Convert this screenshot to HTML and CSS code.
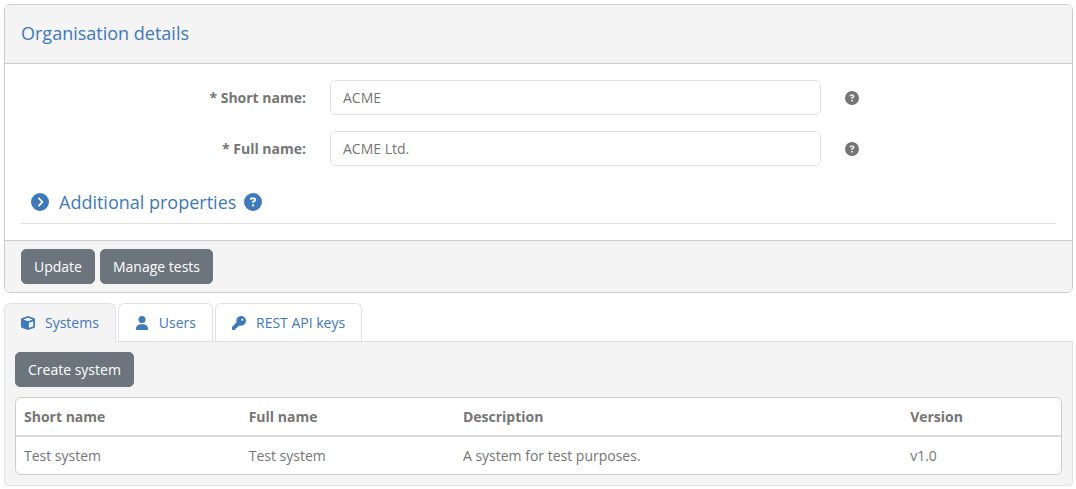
FILE: index.html
```html
<!DOCTYPE html>
<html lang="en">
<head>
    <meta charset="UTF-8">
    <meta name="viewport" content="width=device-width, initial-scale=1.0">
    <title>Organisation details</title>
    <link rel="stylesheet" href="styles.css">
</head>
<body>
    <!-- Shared icons -->
    <svg class="icon-defs" aria-hidden="true">
        <symbol id="icon-question" viewBox="0 0 512 512">
            <path d="M256 512A256 256 0 1 0 256 0a256 256 0 1 0 0 512zM169.8 165.3c7.9-22.3 29.1-37.3 52.8-37.3l58.3 0c34.9 0 63.1 28.3 63.1 63.1c0 22.6-12.1 43.5-31.7 54.8L280 264.4c-.2 13-10.9 23.6-24 23.6c-13.3 0-24-10.7-24-24l0-13.5c0-8.6 4.6-16.5 12.1-20.8l44.3-25.4c4.7-2.7 7.6-7.7 7.6-13.1c0-8.4-6.8-15.1-15.1-15.1l-58.3 0c-3.4 0-6.4 2.1-7.5 5.3l-.4 1.2c-4.4 12.5-18.2 19-30.6 14.6s-19-18.2-14.6-30.6l.4-1.2zM224 352a32 32 0 1 1 64 0 32 32 0 1 1 -64 0z"/>
        </symbol>
        <symbol id="icon-chevron" viewBox="0 0 512 512">
            <path d="M0 256a256 256 0 1 0 512 0A256 256 0 1 0 0 256zM241 377c-9.4 9.4-24.6 9.4-33.9 0s-9.4-24.6 0-33.9l87-87-87-87c-9.4-9.4-9.4-24.6 0-33.9s24.6-9.4 33.9 0L345 239c9.4 9.4 9.4 24.6 0 33.9L241 377z"/>
        </symbol>
    </svg>

    <!-- Organisation form -->
    <form class="card">
        <div class="card-header">
            <h1>Organisation details</h1>
        </div>
        <div class="card-body">
            <div class="form-row">
                <label for="short-name">* Short name:</label>
                <input type="text" id="short-name" value="ACME">
                <svg class="icon help" role="img" aria-label="Short name help"><use href="#icon-question"/></svg>
            </div>
            <div class="form-row">
                <label for="full-name">* Full name:</label>
                <input type="text" id="full-name" value="ACME Ltd.">
                <svg class="icon help" role="img" aria-label="Full name help"><use href="#icon-question"/></svg>
            </div>
            <h2 class="properties">
                <a href="#properties">
                    <svg class="icon icon-lg"><use href="#icon-chevron"/></svg>
                    <span>Additional properties</span>
                </a>
                <svg class="icon icon-lg" role="img" aria-label="Properties help"><use href="#icon-question"/></svg>
            </h2>
        </div>
        <div class="card-footer">
            <button type="button" class="btn">Update</button>
            <button type="button" class="btn">Manage tests</button>
        </div>
    </form>

    <!-- Tabs -->
    <nav class="tabs">
        <a href="#systems" class="tab active">
            <svg class="icon" viewBox="0 0 512 512"><path d="M234.5 5.7c13.9-5 29.1-5 43.1 0l192 68.6C495 83.4 512 107.5 512 134.6l0 242.9c0 27-17 51.2-42.5 60.3l-192 68.6c-13.9 5-29.1 5-43.1 0l-192-68.6C17 428.6 0 404.5 0 377.4L0 134.6c0-27 17-51.2 42.5-60.3l192-68.6zM256 66L82.3 128 256 190l173.7-62L256 66zm32 368.6l160-57.1 0-188L288 246.6l0 188z"/></svg>
            Systems
        </a>
        <a href="#users" class="tab">
            <svg class="icon" viewBox="0 0 448 512"><path d="M224 256A128 128 0 1 0 224 0a128 128 0 1 0 0 256zm-45.7 48C79.8 304 0 383.8 0 482.3C0 498.7 13.3 512 29.7 512l388.6 0c16.4 0 29.7-13.3 29.7-29.7C448 383.8 368.2 304 269.7 304l-91.4 0z"/></svg>
            Users
        </a>
        <a href="#api-keys" class="tab">
            <svg class="icon" viewBox="0 0 512 512"><path d="M336 352c97.2 0 176-78.8 176-176S433.2 0 336 0S160 78.8 160 176c0 18.7 2.9 36.8 8.3 53.7L7 391c-4.5 4.5-7 10.6-7 17l0 80c0 13.3 10.7 24 24 24l80 0c13.3 0 24-10.7 24-24l0-40 40 0c13.3 0 24-10.7 24-24l0-40 40 0c6.4 0 12.5-2.5 17-7l33.3-33.3c16.9 5.4 35 8.3 53.7 8.3zM376 96a40 40 0 1 1 0 80 40 40 0 1 1 0-80z"/></svg>
            REST API keys
        </a>
    </nav>

    <!-- Systems -->
    <div class="tab-pane" id="systems">
        <button type="button" class="btn">Create system</button>
        <div class="table-box">
            <table>
                <thead>
                    <tr>
                        <th class="col-short">Short name</th>
                        <th class="col-full">Full name</th>
                        <th class="col-description">Description</th>
                        <th>Version</th>
                    </tr>
                </thead>
                <tbody>
                    <tr>
                        <td>Test system</td>
                        <td>Test system</td>
                        <td>A system for test purposes.</td>
                        <td>v1.0</td>
                    </tr>
                </tbody>
            </table>
        </div>
    </div>
</body>
</html>
```
FILE: styles.css
```css
/* General Styles */

* {
    box-sizing: border-box;
}

body {
    margin: 0;
    padding: 4px 3px 3px 4px;
    background-color: #fff;
    color: #757575;
    font-family: "Open Sans", sans-serif;
    font-size: 14px;
    line-height: 21px;
}

h1, h2 {
    margin: 0;
    color: #3e79b9;
    font-size: 18px;
    font-weight: 400;
    line-height: 26px;
}

a {
    color: #3e79b9;
    text-decoration: none;
}

.icon-defs {
    display: none;
}

.icon {
    width: 14px;
    height: 14px;
    flex: none;
    fill: currentColor;
}

.icon-lg {
    width: 18px;
    height: 18px;
}

.btn {
    padding: 6px 12px;
    border: 1px solid #6c757d;
    border-radius: 5px;
    background-color: #6c757d;
    color: #fff;
    font-family: inherit;
    font-size: 14px;
    line-height: 21px;
}

.btn:hover {
    background-color: #5c636a;
}

/* Card */

.card {
    border: 1px solid #ccc;
    border-radius: 6px;
    overflow: hidden;
}

.card-header {
    padding: 15px 16px 17px;
    background-color: #f4f4f4;
    border-bottom: 1px solid #ccc;
}

.card-body {
    padding: 16px;
}

.card-footer {
    display: flex;
    gap: 5px;
    padding: 8px 16px;
    background-color: #f4f4f4;
    border-top: 1px solid #ccc;
}

.form-row {
    display: grid;
    grid-template-columns: 285fr 491fr 211fr;
    column-gap: 24px;
    align-items: center;
    margin-bottom: 16px;
}

.form-row label {
    text-align: right;
    font-weight: 700;
}

.form-row input {
    width: 100%;
    padding: 6px 12px;
    border: 1px solid #dee2e6;
    border-radius: 5px;
    background-color: #fff;
    color: #757575;
    font-family: inherit;
    font-size: 14px;
    line-height: 21px;
}

.properties {
    display: flex;
    align-items: center;
    gap: 8px;
    padding: 7px 10px 8px;
    border-bottom: 1px solid #e0e0e0;
}

.properties a {
    display: flex;
    align-items: center;
    gap: 10px;
}

/* Tabs */

.tabs {
    display: flex;
    align-items: flex-start;
    gap: 2px;
    margin-top: 10px;
}

.tab {
    display: flex;
    align-items: center;
    gap: 10px;
    padding: 8px 16px;
    border: 1px solid #dee2e6;
    border-bottom: 0;
    border-radius: 6px 6px 0 0;
}

/* covers the top border of the pane */
.tab.active {
    position: relative;
    margin-bottom: -1px;
    padding-bottom: 9px;
    background-color: #f4f4f4;
}

.tab-pane {
    padding: 10px;
    background-color: #f4f4f4;
    border: 1px solid #dee2e6;
    border-radius: 0 0 4px 4px;
}

/* Table */

.table-box {
    margin-top: 10px;
    border: 1px solid #ccc;
    border-radius: 6px;
    background-color: #fff;
    overflow: hidden;
}

table {
    width: 100%;
    border-collapse: separate;
    border-spacing: 0;
    table-layout: fixed;
}

th, td {
    padding: 8px;
    text-align: left;
}

th {
    border-bottom: 2px solid #ddd;
}

.col-short {
    width: 21.5%;
}

.col-full {
    width: 20.5%;
}

.col-description {
    width: 42.8%;
}
```
